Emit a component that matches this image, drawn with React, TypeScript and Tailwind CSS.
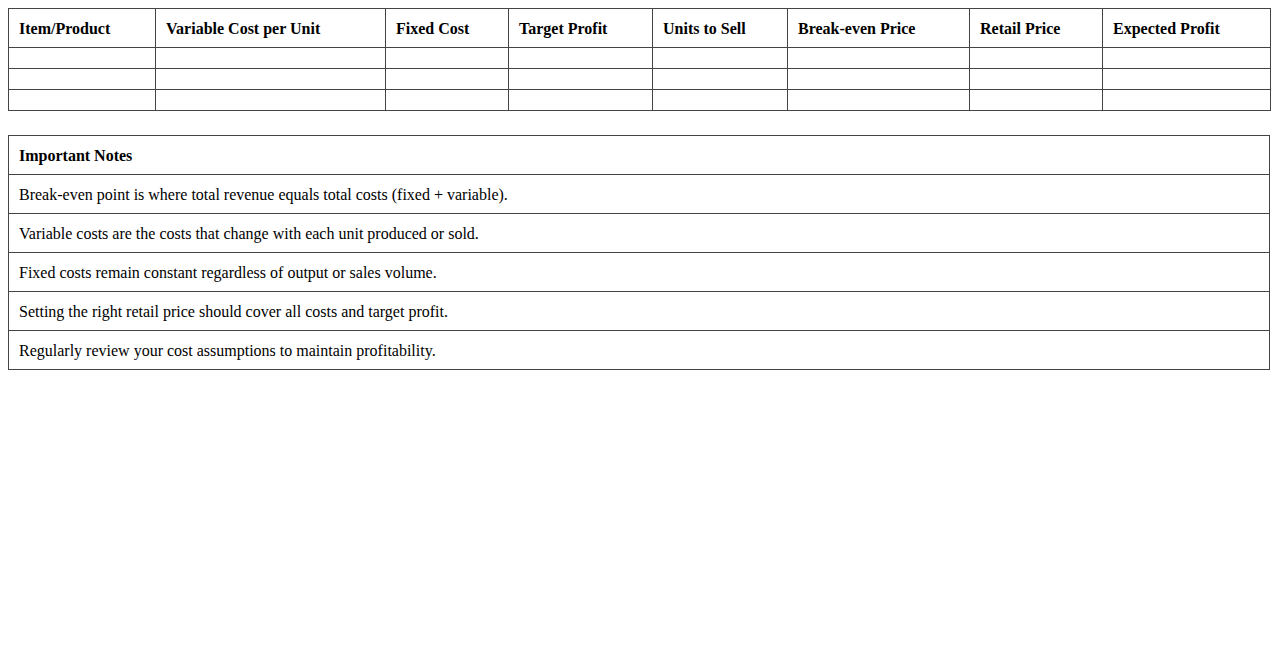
const columns = [
  { label: "Item/Product", w: "w-[147px]" },
  { label: "Variable Cost per Unit", w: "w-[230px]" },
  { label: "Fixed Cost", w: "w-[123px]" },
  { label: "Target Profit", w: "w-[144px]" },
  { label: "Units to Sell", w: "w-[135px]" },
  { label: "Break-even Price", w: "w-[182px]" },
  { label: "Retail Price", w: "w-[133px]" },
  { label: "Expected Profit", w: "w-[168px]" },
];

const notes = [
  "Break-even point is where total revenue equals total costs (fixed + variable).",
  "Variable costs are the costs that change with each unit produced or sold.",
  "Fixed costs remain constant regardless of output or sales volume.",
  "Setting the right retail price should cover all costs and target profit.",
  "Regularly review your cost assumptions to maintain profitability.",
];

export default function App() {
  return (
    <div className="min-h-screen bg-white p-2 font-['Liberation_Serif',serif] text-base leading-[18px] text-black">
      <table className="w-full table-fixed border-collapse">
        <colgroup>
          {columns.map((c) => (
            <col key={c.label} className={c.w} />
          ))}
        </colgroup>
        <thead>
          <tr>
            {columns.map((c) => (
              <th key={c.label} className="border border-[#444] px-[10px] pt-[11px] pb-[9px] text-left font-bold">
                {c.label}
              </th>
            ))}
          </tr>
        </thead>
        <tbody>
          {[0, 1, 2].map((r) => (
            <tr key={r}>
              {columns.map((c) => (
                <td key={c.label} className="h-[21px] border border-[#444] p-[10px]" />
              ))}
            </tr>
          ))}
        </tbody>
      </table>

      <table className="mt-6 w-full border-collapse">
        <thead>
          <tr>
            <th className="border border-[#444] px-[10px] pt-[11px] pb-[9px] text-left font-bold">Important Notes</th>
          </tr>
        </thead>
        <tbody>
          {notes.map((n) => (
            <tr key={n}>
              <td className="border border-[#444] px-[10px] pt-[11px] pb-[9px]">{n}</td>
            </tr>
          ))}
        </tbody>
      </table>
    </div>
  );
}
